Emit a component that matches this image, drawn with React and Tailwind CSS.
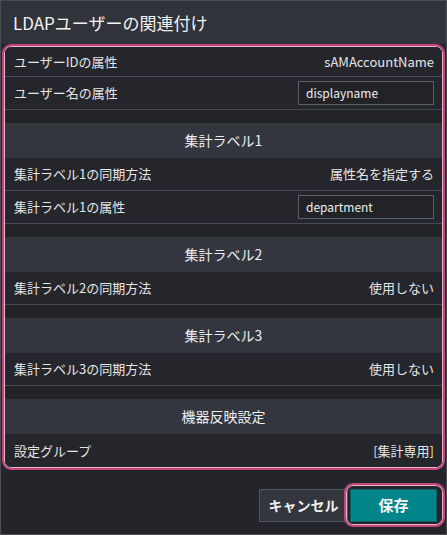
import React from "react";

const font = { fontFamily: '"Noto Sans CJK JP", "Noto Sans", sans-serif' };

const sections = [
  {
    rows: [
      { label: "ユーザーIDの属性", value: "sAMAccountName", first: true },
      { label: "ユーザー名の属性", input: "displayname" },
    ],
  },
  {
    title: "集計ラベル1",
    rows: [
      { label: "集計ラベル1の同期方法", value: "属性名を指定する" },
      { label: "集計ラベル1の属性", input: "department" },
    ],
  },
  {
    title: "集計ラベル2",
    rows: [{ label: "集計ラベル2の同期方法", value: "使用しない" }],
  },
  {
    title: "集計ラベル3",
    rows: [{ label: "集計ラベル3の同期方法", value: "使用しない" }],
  },
  {
    title: "機器反映設定",
    rows: [{ label: "設定グループ", value: "[集計専用]", last: true }],
  },
];

function Row({ row }) {
  return (
    <div
      className={`flex items-center justify-between pl-[9px] pr-[8px] bg-[#25262b] text-[13px] text-[#e4e5e7] ${
        row.first ? "h-[30px]" : "h-[33px]"
      } ${row.last ? "" : "border-b border-[#474a51]"}`}
    >
      <span>{row.label}</span>
      {row.input ? (
        <div className="w-[136px] h-[24px] border border-[#5b5f67] bg-[#222327] px-[7px] flex items-center text-[12px] text-[#eceef0]">
          {row.input}
        </div>
      ) : (
        <span>{row.value}</span>
      )}
    </div>
  );
}

export default function App() {
  return (
    <div
      style={font}
      className="w-[447px] h-[535px] bg-[#24252a] border border-[#4b4d53] flex flex-col overflow-hidden"
    >
      <div className="h-[43px] bg-[#30333a] flex items-center pl-[12px] text-[17px] text-[#f2f2f2]">
        LDAPユーザーの関連付け
      </div>

      <div className="mx-[1px] rounded-[9px] border-2 border-[#c4437a] shadow-[inset_0_0_0_1px_#e9b3c8] p-[1px] overflow-hidden">
        <div className="rounded-[6px] overflow-hidden">
          {sections.map((s, i) => (
            <div key={i}>
              {i > 0 && <div className="h-[13px] bg-[#222327]" />}
              {s.title && (
                <div className="h-[35px] bg-[#33363e] flex items-center justify-center text-[14px] text-[#eceef0]">
                  {s.title}
                </div>
              )}
              {s.rows.map((r, j) => (
                <Row key={j} row={r} />
              ))}
            </div>
          ))}
        </div>
      </div>

      <div className="flex-1 flex items-start justify-end pt-[19px] pr-[9px]">
        <div className="flex gap-[2px]">
          <button className="w-[89px] h-[33px] bg-[#33363d] border border-[#50545b] text-[14px] font-bold text-[#f0f0f0]">
            キャンセル
          </button>
          <div className="relative">
            <div className="absolute -left-[6px] -top-[6px] -right-[8px] -bottom-[5px] rounded-[9px] border-2 border-[#c4437a] shadow-[inset_0_0_0_1px_#e9b3c8]" />
            <button className="w-[87px] h-[33px] bg-[#00868a] border border-[#0c5f62] text-[15px] font-bold text-[#f4f4f4]">
              保存
            </button>
          </div>
        </div>
      </div>
    </div>
  );
}
